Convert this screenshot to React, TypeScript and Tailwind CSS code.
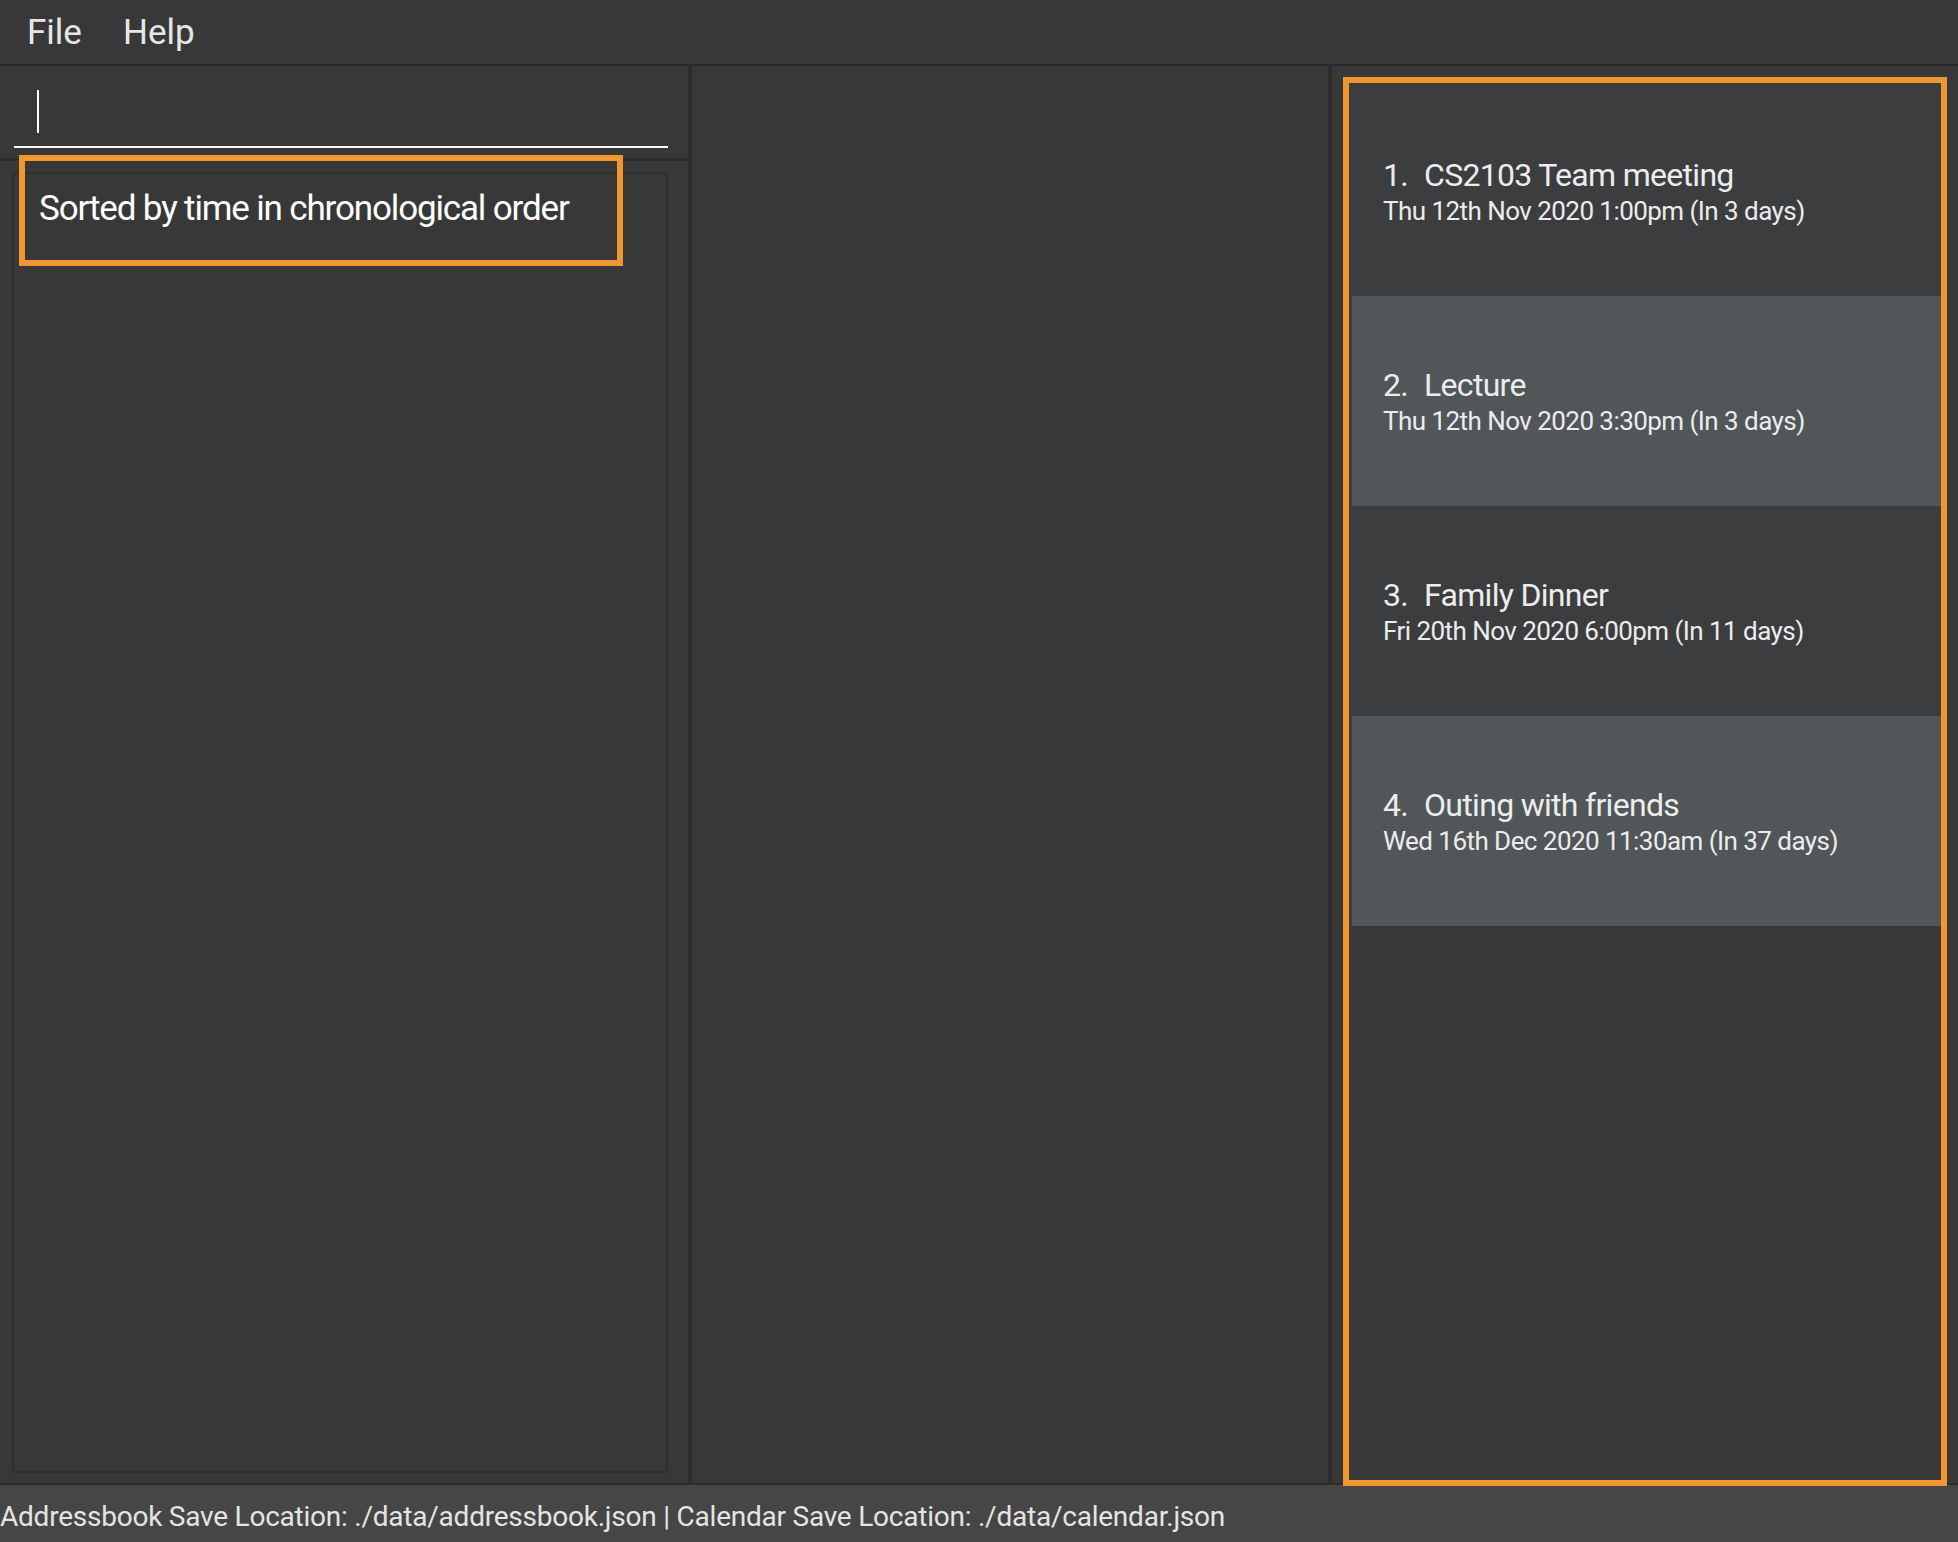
const events = [
  { id: 1, name: 'CS2103 Team meeting', when: 'Thu 12th Nov 2020 1:00pm (In 3 days)' },
  { id: 2, name: 'Lecture', when: 'Thu 12th Nov 2020 3:30pm (In 3 days)' },
  { id: 3, name: 'Family Dinner', when: 'Fri 20th Nov 2020 6:00pm (In 11 days)' },
  { id: 4, name: 'Outing with friends', when: 'Wed 16th Dec 2020 11:30am (In 37 days)' },
];

function EventCard({ id, name, when }: { id: number; name: string; when: string }) {
  const odd = id % 2 === 1;
  return (
    <div
      className={
        odd
          ? 'h-[210px] border-l-[3px] border-[#3c3d3f] bg-[#3c3d3f] pl-[31px] pt-[71px] text-[#ececec]'
          : 'h-[210px] border-l-[3px] border-[#3c3d3f] bg-[#515659] pl-[31px] pt-[71px] text-[#ececec]'
      }
    >
      <div className="flex gap-[16px] text-[32px] leading-[36px] tracking-[-0.7px]">
        <span>{id}.</span>
        <span>{name}</span>
      </div>
      <div className="mt-[3px] text-[26px] leading-[31px] tracking-[-0.55px]">{when}</div>
    </div>
  );
}

export default function App() {
  return (
    <div className="w-[1958px] h-[1542px] overflow-hidden bg-[#383838] font-['Roboto',sans-serif]">
      {/* Menu bar */}
      <div className="h-[66px] border-b-2 border-[#2b2b2b] flex items-center gap-[41px] pl-[27px] pt-[2px] text-[35px] text-[#e6e6e6]">
        <span>File</span>
        <span>Help</span>
      </div>

      <div className="h-[1417px] flex">
        {/* Left: command box + result */}
        <div className="relative w-[688px] flex flex-col">
          <div className="h-[95px] border-b-[3px] border-[#2c2c2c] pt-[24px]">
            <div className="ml-[14px] mr-[20px] h-[58px] border-b-2 border-white">
              <div className="ml-[23px] w-[2px] h-[43px] bg-white" />
            </div>
          </div>
          <div className="flex-1 pt-[11px] pb-[10px] pl-[12px] pr-[20px]">
            <div className="h-full border-2 border-[#2e2e2e] pl-[25px] pt-[14px]">
              <p className="text-[35px] leading-[41px] text-white tracking-[-1.15px]">
                Sorted by time in chronological order
              </p>
            </div>
          </div>
          <div className="absolute left-[19px] top-[89px] w-[604px] h-[111px] border-[6px] border-[#f0972f]" />
        </div>

        <div className="w-[4px] bg-[#2c2c2c]" />

        {/* Middle */}
        <div className="w-[636px]" />

        <div className="w-[4px] bg-[#2c2c2c]" />

        {/* Right: event list */}
        <div className="flex-1 pt-[11px] pl-[11px]">
          <div className="relative z-10 w-[604px] h-[1409px] border-[6px] border-[#f0972f]">
            <div className="h-[3px] bg-[#3c3d3f]" />
            {events.map((e) => (
              <EventCard key={e.id} {...e} />
            ))}
          </div>
        </div>
      </div>

      {/* Status bar */}
      <div className="h-[59px] border-t-2 border-[#2b2b2b] bg-[#464646] pt-[15px] text-[28px] leading-[33px] text-[#e4e4e4] tracking-[-0.23px]">
        Addressbook Save Location: ./data/addressbook.json | Calendar Save Location: ./data/calendar.json
      </div>
    </div>
  );
}
